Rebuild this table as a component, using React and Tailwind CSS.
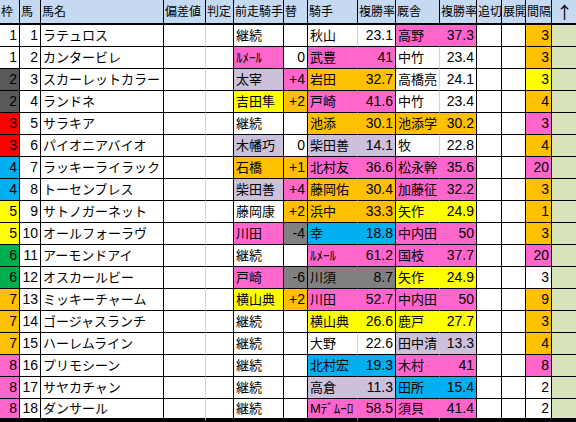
import React from 'react';

const BG = {
    W: 'bg-white',
    P: 'bg-[#ff66cc]',
    O: 'bg-[#ffc000]',
    L: 'bg-[#ccc0da]',
    Y: 'bg-[#ffff00]',
    G: 'bg-[#808080]',
    B: 'bg-[#00b0f0]',
}

const WAKU = {
    1: 'bg-white',
    2: 'bg-[#595959]',
    3: 'bg-[#ff0000]',
    4: 'bg-[#00b0f0]',
    5: 'bg-[#ffff00]',
    6: 'bg-[#00b050]',
    7: 'bg-[#ffc000]',
    8: 'bg-[#ff66cc]',
}

// 枠, 馬, 馬名, 前走騎手, 色, 替, 色, 騎手, 複勝率, 色, 厩舎, 複勝率, 色, 間隔, 色
const rows = [
    [1, 1, 'ラテュロス', '継続', 'W', '', 'W', '秋山', '23.1', 'W', '高野', '37.3', 'P', '3', 'O'],
    [1, 2, 'カンタービレ', 'ﾙﾒｰﾙ', 'P', '0', 'W', '武豊', '41', 'P', '中竹', '23.4', 'W', '3', 'O'],
    [2, 3, 'スカーレットカラー', '太宰', 'L', '+4', 'P', '岩田', '32.7', 'O', '高橋亮', '24.1', 'W', '3', 'Y'],
    [2, 4, 'ランドネ', '吉田隼', 'Y', '+2', 'O', '戸崎', '41.6', 'P', '中竹', '23.4', 'W', '4', 'O'],
    [3, 5, 'サラキア', '継続', 'W', '', 'W', '池添', '30.1', 'O', '池添学', '30.2', 'O', '3', 'P'],
    [3, 6, 'パイオニアバイオ', '木幡巧', 'L', '0', 'W', '柴田善', '14.1', 'L', '牧', '22.8', 'W', '4', 'O'],
    [4, 7, 'ラッキーライラック', '石橋', 'O', '+1', 'O', '北村友', '36.6', 'P', '松永幹', '35.6', 'P', '20', 'P'],
    [4, 8, 'トーセンブレス', '柴田善', 'L', '+4', 'P', '藤岡佑', '30.4', 'O', '加藤征', '32.2', 'P', '3', 'O'],
    [5, 9, 'サトノガーネット', '藤岡康', 'W', '+2', 'O', '浜中', '33.3', 'O', '矢作', '24.9', 'Y', '1', 'O'],
    [5, 10, 'オールフォーラヴ', '川田', 'P', '-4', 'G', '幸', '18.8', 'B', '中内田', '50', 'P', '3', 'O'],
    [6, 11, 'アーモンドアイ', '継続', 'W', '', 'W', 'ﾙﾒｰﾙ', '61.2', 'P', '国枝', '37.7', 'P', '20', 'P'],
    [6, 12, 'オスカールビー', '戸崎', 'P', '-6', 'G', '川須', '8.7', 'G', '矢作', '24.9', 'Y', '3', 'W'],
    [7, 13, 'ミッキーチャーム', '横山典', 'Y', '+2', 'O', '川田', '52.7', 'P', '中内田', '50', 'P', '9', 'O'],
    [7, 14, 'ゴージャスランチ', '継続', 'W', '', 'W', '横山典', '26.6', 'Y', '鹿戸', '27.7', 'Y', '3', 'O'],
    [7, 15, 'ハーレムライン', '継続', 'W', '', 'W', '大野', '22.6', 'W', '田中清', '13.3', 'L', '4', 'O'],
    [8, 16, 'プリモシーン', '継続', 'W', '', 'W', '北村宏', '19.3', 'B', '木村', '41', 'P', '8', 'P'],
    [8, 17, 'サヤカチャン', '継続', 'W', '', 'W', '高倉', '11.3', 'L', '田所', '15.4', 'B', '2', 'W'],
    [8, 18, 'ダンサール', '継続', 'W', '', 'W', 'Mﾃﾞﾑｰﾛ', '58.5', 'P', '須貝', '41.4', 'P', '2', 'W'],
]

const headers = ['枠', '馬', '馬名', '偏差値', '判定', '前走騎手', '替', '騎手', '複勝率', '厩舎', '複勝率', '追切', '展開', '間隔', '↑']

const Cell = ({ className = '', children }) => (
    <div className={`flex items-center overflow-hidden whitespace-nowrap ${className}`}>
        {children}
    </div>
)

const App = () => {
    return (
        <div
            className="w-[576px] h-[422px] overflow-hidden bg-white text-black"
            style={{ fontFamily: '"Liberation Sans", "Noto Sans CJK JP", sans-serif' }}
        >
            <div className="grid grid-cols-[20px_21px_123px_42px_28px_50px_24px_50px_38px_44px_37px_25px_24px_26px_24px]">
                {/* Header */}
                {headers.map((h, i) => (
                    <Cell
                        key={h + i}
                        className={`h-[25px] bg-[#c5d9f1] border-b-2 border-black pl-[1px] ${i === 14 ? "text-[17px] pl-[4px] font-['Noto_Sans_CJK_JP']" : 'text-[12px]'} ${i < 14 ? 'border-r' : ''}`}
                    >
                        {h}
                    </Cell>
                ))}

                {/* Body */}
                {rows.map((r, idx) => {
                    const [waku, num, name, prev, prevC, chg, chgC, jockey, jRate, jC, trainer, tRate, tC, gap, gapC] = r
                    const last = idx === rows.length - 1
                    const rb = last ? 'h-[23px] border-b-4 border-black' : 'h-[22px] border-b border-black'
                    return (
                        <React.Fragment key={num}>
                            <Cell className={`${rb} ${WAKU[waku]} border-r justify-end pr-[2px] text-[14px]`}>{waku}</Cell>
                            <Cell className={`${rb} bg-white border-r justify-end pr-[2px] text-[14px]`}>{num}</Cell>
                            <Cell className={`${rb} bg-white border-r pl-[2px] text-[13px]`}>{name}</Cell>
                            <Cell className={`${rb} bg-white border-r border-r-[#d4d4d4]`} />
                            <Cell className={`${rb} bg-white border-r`} />
                            <Cell className={`${rb} ${BG[prevC]} border-r pl-[2px] text-[13px]`}>{prev}</Cell>
                            <Cell className={`${rb} ${BG[chgC]} border-r justify-end pr-[2px] text-[14px]`}>{chg}</Cell>
                            <Cell className={`${rb} ${BG[jC]} border-r pl-[2px] text-[13px] ${jC === 'W' ? 'border-r-[#d4d4d4]' : 'border-r-transparent'}`}>{jockey}</Cell>
                            <Cell className={`${rb} ${BG[jC]} border-r justify-end pr-[2px] text-[14px]`}>{jRate}</Cell>
                            <Cell className={`${rb} ${BG[tC]} border-r pl-[2px] text-[13px] ${tC === 'W' ? 'border-r-[#d4d4d4]' : 'border-r-transparent'}`}>{trainer}</Cell>
                            <Cell className={`${rb} ${BG[tC]} border-r justify-end pr-[2px] text-[14px]`}>{tRate}</Cell>
                            <Cell className={`${rb} bg-white border-r`} />
                            <Cell className={`${rb} bg-white border-r`} />
                            <Cell className={`${rb} ${BG[gapC]} border-r justify-end pr-[2px] text-[14px]`}>{gap}</Cell>
                            <Cell className={`${rb} bg-[#d8e4bc]`} />
                        </React.Fragment>
                    )
                })}
            </div>
        </div>
    );
}

export default App;
